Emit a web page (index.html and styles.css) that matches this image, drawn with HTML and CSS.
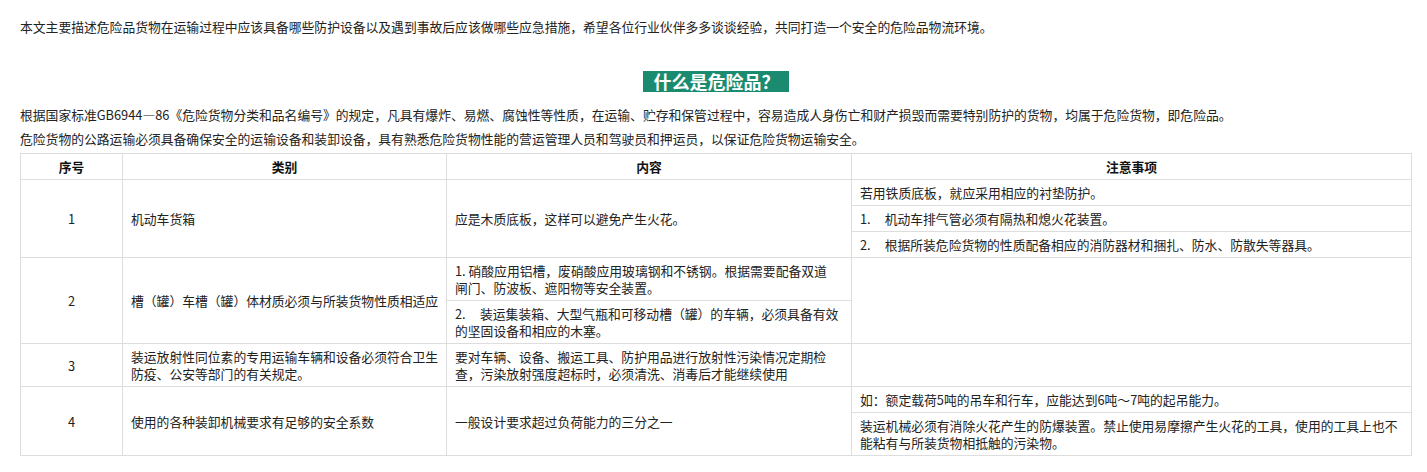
FILE: index.html
```html
<!DOCTYPE html>
<html lang="zh-CN">
<head>
<meta charset="utf-8">
<title>危险品</title>
<link rel="stylesheet" href="styles.css">
</head>
<body>
<div class="page">
  <p class="intro">本文主要描述危险品货物在运输过程中应该具备哪些防护设备以及遇到事故后应该做哪些应急措施，希望各位行业伙伴多多谈谈经验，共同打造一个安全的危险品物流环境。</p>
  <div class="heading"><span class="heading-box">什么是危险品？</span></div>
  <p class="line">根据国家标准GB6944—86《危险货物分类和品名编号》的规定，凡具有爆炸、易燃、腐蚀性等性质，在运输、贮存和保管过程中，容易造成人身伤亡和财产损毁而需要特别防护的货物，均属于危险货物，即危险品。</p>
  <p class="line">危险货物的公路运输必须具备确保安全的运输设备和装卸设备，具有熟悉危险货物性能的营运管理人员和驾驶员和押运员，以保证危险货物运输安全。</p>
  <table class="grid">
    <colgroup>
      <col class="c1"><col class="c2"><col class="c3"><col class="c4">
    </colgroup>
    <thead>
      <tr><th>序号</th><th>类别</th><th>内容</th><th>注意事项</th></tr>
    </thead>
    <tbody>
      <tr>
        <td class="num-cell" rowspan="3">1</td>
        <td rowspan="3">机动车货箱</td>
        <td rowspan="3">应是木质底板，这样可以避免产生火花。</td>
        <td>若用铁质底板，就应采用相应的衬垫防护。</td>
      </tr>
      <tr><td><span class="n wide">1.</span>机动车排气管必须有隔热和熄火花装置。</td></tr>
      <tr><td><span class="n wide">2.</span>根据所装危险货物的性质配备相应的消防器材和捆扎、防水、防散失等器具。</td></tr>
      <tr>
        <td class="num-cell" rowspan="2">2</td>
        <td rowspan="2">槽（罐）车槽（罐）体材质必须与所装货物性质相适应</td>
        <td class="loose">1.&nbsp;硝酸应用铝槽，废硝酸应用玻璃钢和不锈钢。根据需要配备双道闸门、防波板、遮阳物等安全装置。</td>
        <td rowspan="2"></td>
      </tr>
      <tr><td>2.&nbsp;&nbsp;&nbsp;&nbsp;&nbsp;装运集装箱、大型气瓶和可移动槽（罐）的车辆，必须具备有效的坚固设备和相应的木塞。</td></tr>
      <tr>
        <td class="num-cell">3</td>
        <td>装运放射性同位素的专用运输车辆和设备必须符合卫生防疫、公安等部门的有关规定。</td>
        <td>要对车辆、设备、搬运工具、防护用品进行放射性污染情况定期检查，污染放射强度超标时，必须清洗、消毒后才能继续使用</td>
        <td></td>
      </tr>
      <tr>
        <td class="num-cell" rowspan="2">4</td>
        <td rowspan="2">使用的各种装卸机械要求有足够的安全系数</td>
        <td rowspan="2">一般设计要求超过负荷能力的三分之一</td>
        <td>如：额定载荷5吨的吊车和行车，应能达到6吨～7吨的起吊能力。</td>
      </tr>
      <tr><td>装运机械必须有消除火花产生的防爆装置。禁止使用易摩擦产生火花的工具，使用的工具上也不能粘有与所装货物相抵触的污染物。</td></tr>
    </tbody>
  </table>
</div>
</body>
</html>
```

FILE: styles.css
```css
html, body {
  margin: 0;
  padding: 0;
  background: #ffffff;
}

body {
  font-family: "Noto Sans CJK SC", "Microsoft YaHei", "Noto Sans", sans-serif;
  font-size: 12.8px;
  color: #222222;
}

.page {
  padding: 15px 16px 0 20px;
}

.intro {
  margin: 0;
  line-height: 24px;
}

.heading {
  margin: 32px 0 10px;
  text-align: center;
}

.heading-box {
  display: inline-block;
  background: #1a8b6f;
  color: #ffffff;
  font-size: 18px;
  font-weight: bold;
  line-height: 21px;
  height: 21px;
  padding: 0 9px 0 11px;
}

.line {
  margin: 0;
  line-height: 24px;
}

.grid {
  margin-top: 2px;
  width: 1391px;
  table-layout: fixed;
  border-collapse: collapse;
}

.c1 { width: 102px; }
.c2 { width: 324px; }
.c3 { width: 405px; }
.c4 { width: 560px; }

.grid th,
.grid td {
  border: 1px solid #dddddd;
  padding: 4px 4px 4px 8px;
  line-height: 17px;
  vertical-align: middle;
  text-align: left;
}

.grid td.loose {
  padding-right: 14px;
}

.grid th {
  text-align: center;
  font-weight: bold;
  color: #111111;
  padding-right: 8px;
}

.grid td.num-cell {
  text-align: center;
  padding-right: 8px;
}

.n.wide {
  margin-right: 14px;
}
```
